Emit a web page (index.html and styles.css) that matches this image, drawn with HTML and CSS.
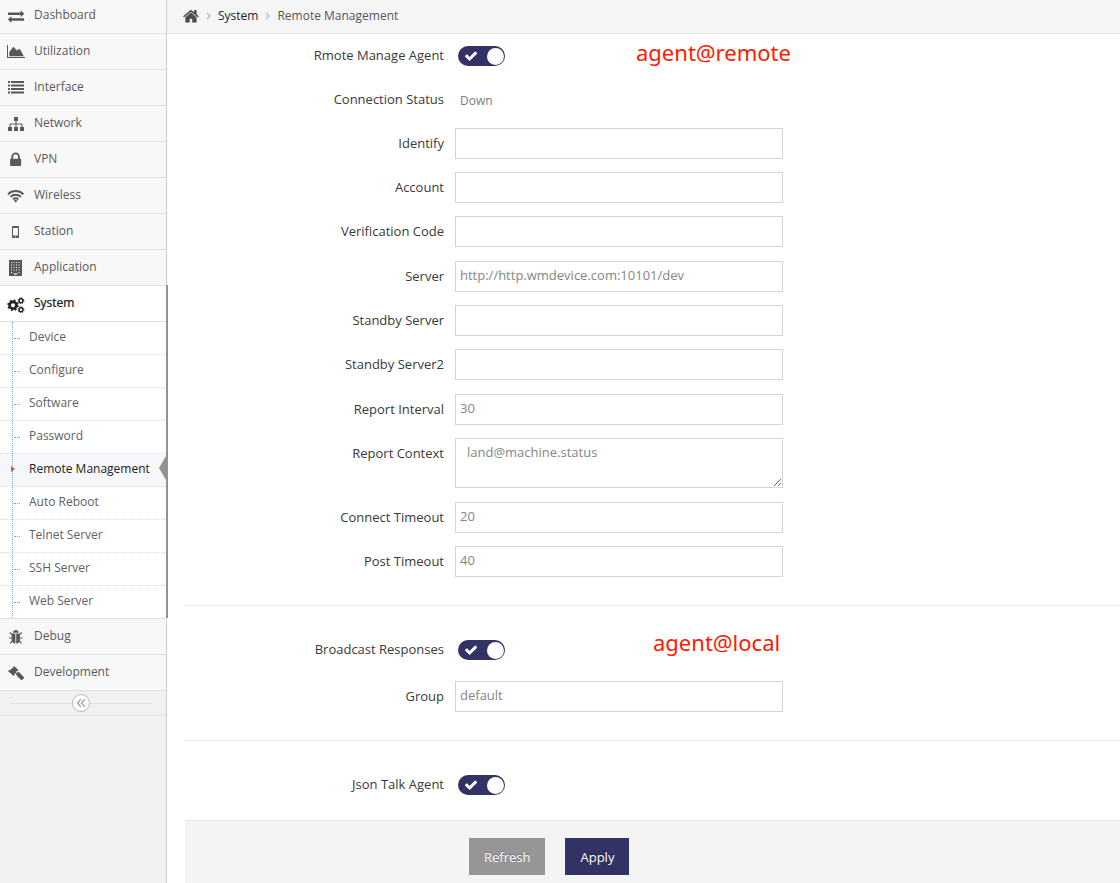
FILE: index.html
```html
<!DOCTYPE html>
<html lang="en">
<head>
<meta charset="utf-8">
<meta name="viewport" content="width=device-width, initial-scale=1">
<title>Remote Management</title>
<link rel="stylesheet" href="styles.css">
</head>
<body>
<svg class="defs" aria-hidden="true">
  <symbol id="check" viewBox="120 290 1552 1230"><path d="M1671 566q0 40-28 68l-724 724-136 136q-28 28-68 28t-68-28l-136-136-362-362q-28-28-28-68t28-68l136-136q28-28 68-28t68 28l294 295 656-657q28-28 68-28t68 28l136 136q28 28 28 68z"/></symbol>
</svg>
<div class="app">
  <nav class="sidebar" aria-label="Main menu">
    <ul class="menu">
      <li class="menu-item"><a href="#"><svg class="icon" viewBox="0 0 18 18"><path transform="translate(1 1) scale(.009)" d="M1792 1184v192q0 13-9.5 22.5t-22.5 9.5h-1376v192q0 13-9.500 22.500t-22.500 9.500q-12 0-24-10l-319-320q-9-9-9-22 0-14 9-23l320-320q9-9 23-9 13 0 22.500 9.500t9.500 22.500v192h1376q13 0 22.500 9.500t9.500 22.500zm0-544q0 14-9 23l-320 320q-9 9-23 9-13 0-22.500-9.500t-9.500-22.500v-192h-1376q-13 0-22.500-9.500t-9.500-22.500v-192q0-13 9.500-22.500t22.500-9.500h1376v-192q0-14 9-23t23-9q12 0 24 10l319 319q9 9 9 23z"/></svg><span>Dashboard</span></a></li>
      <li class="menu-item"><a href="#"><svg class="icon" viewBox="0 0 18 18"><path d="M0 2h1v12h17v1H0z"/><path d="M2.300 13.300V9L6.300 3.700l3.700 3.800 2.800-1.800 4 7.600z"/></svg><span>Utilization</span></a></li>
      <li class="menu-item"><a href="#"><svg class="icon" viewBox="0 0 18 18"><path d="M1 2h2v2H1zM4 2h13v2H4zM1 5.500h2v2H1zM4 5.500h13v2H4zM1 9h2v2H1zM4 9h13v2H4zM1 12.500h2v2H1zM4 12.500h13v2H4z"/></svg><span>Interface</span></a></li>
      <li class="menu-item"><a href="#"><svg class="icon" viewBox="0 0 18 18"><path d="M7.500 2h3a.5.5 0 0 1 .5.5v3a.5.5 0 0 1-.5.500h-1v2.500H15a.5.5 0 0 1 .5.5V12H17v4h-4v-4h1.500V9.500h-5V12H11v4H7v-4h1.500V9.500h-5V12H5v4H1v-4h1.500V9a.5.5 0 0 1 .5-.5h5.500V6h-1a.5.5 0 0 1-.5-.5v-3a.5.5 0 0 1 .5-.5z"/></svg><span>Network</span></a></li>
      <li class="menu-item"><a href="#"><svg class="icon" viewBox="0 0 18 18"><path transform="translate(0 .3) scale(.0096)" d="M640 768h512v-192q0-106-75-181t-181-75-181 75-75 181v192zm832 96v576q0 40-28 68t-68 28h-960q-40 0-68-28t-28-68v-576q0-40 28-68t68-28h32v-192q0-184 132-316t316-132 316 132 132 316v192h32q40 0 68 28t28 68z"/></svg><span>VPN</span></a></li>
      <li class="menu-item"><a href="#"><svg class="icon" viewBox="0 0 18 18"><g fill="none" stroke="currentColor" stroke-width="2"><path d="M1 7.200a11 11 0 0 1 15.400 0"/><path d="M3.500 9.900a7.400 7.400 0 0 1 10.400 0"/><path d="M6 12.400a3.900 3.900 0 0 1 5.400 0"/></g><path d="M8.700 15.400l-1.700-1.700a2.400 2.400 0 0 1 3.400 0z"/></svg><span>Wireless</span></a></li>
      <li class="menu-item"><a href="#"><svg class="icon" viewBox="0 0 18 18"><path fill-rule="evenodd" d="M6 3h5a1 1 0 0 1 1 1v10a1 1 0 0 1-1 1H6a1 1 0 0 1-1-1V4a1 1 0 0 1 1-1zm0 2v7.500h5V5zm2 8.200v1h1v-1z"/></svg><span>Station</span></a></li>
      <li class="menu-item"><a href="#"><svg class="icon" viewBox="0 0 18 18"><path d="M2 1h13v16h-4v-3H6v3H2z"/><path d="M6 14.500h5V17H6z"/><g class="panes" stroke-width="1" stroke-dasharray="1 1.500"><path d="M4 3.500h10M4 6h10M4 8.500h10M4 11h10M4 13.500h1.500M11.500 13.500H14"/></g><path class="panes" d="M7.500 15.500h2"/></svg><span>Application</span></a></li>
      <li class="menu-item open">
        <a href="#"><svg class="icon" viewBox="0 0 18 18"><g fill="none" stroke="currentColor"><circle cx="6" cy="10.300" r="3.400" stroke-width="2.600"/><circle cx="6" cy="10.300" r="5" stroke-width="1.500" stroke-dasharray="2 1.927"/><circle cx="14" cy="5.700" r="1.900" stroke-width="1.400"/><circle cx="14" cy="5.700" r="2.900" stroke-width="1" stroke-dasharray="1.200 1.078"/><circle cx="14" cy="14.700" r="1.900" stroke-width="1.400"/><circle cx="14" cy="14.700" r="2.900" stroke-width="1" stroke-dasharray="1.200 1.078"/></g></svg><span>System</span></a>
        <ul class="submenu">
          <li><a href="#">Device</a></li>
          <li><a href="#">Configure</a></li>
          <li><a href="#">Software</a></li>
          <li><a href="#">Password</a></li>
          <li class="active"><a href="#" aria-current="page">Remote Management</a></li>
          <li><a href="#">Auto Reboot</a></li>
          <li><a href="#">Telnet Server</a></li>
          <li><a href="#">SSH Server</a></li>
          <li><a href="#">Web Server</a></li>
        </ul>
      </li>
      <li class="menu-item"><a href="#"><svg class="icon" viewBox="0 0 18 18"><path d="M6 4.700a2.800 2.700 0 0 1 5.600 0z"/><path d="M4.700 5.500h3.700V15.500C6 15.500 4.700 14 4.700 11.500zM9.200 5.500h3.700v6c0 2.500-1.300 4-3.700 4z"/><path fill="none" stroke="currentColor" stroke-width="1.200" d="M2.800 4.500l2.400 2.400M14.800 4.500l-2.400 2.400M2 10h3M12.600 10h3M3 15.300l2.600-2.600M14.600 15.300L12 12.700"/></svg><span>Debug</span></a></li>
      <li class="menu-item"><a href="#"><svg class="icon" viewBox="0 0 18 18"><path d="M7.200 2l4.300 4.300-1 1-.6-.4-1 1L10 9l.9-.9 1.300.2 4.600 4.600a1 1 0 0 1 0 1.400l-1.500 1.500a1 1 0 0 1-1.400 0L9.500 11.400l-.2-1.300-.9-.9-1.200 1.200.4.600-1 1L1 6.900l1-1 .7.400L6.600 3.200 6.200 3z"/></svg><span>Development</span></a></li>
    </ul>
    <div class="collapse-bar">
      <button type="button" class="collapse" aria-label="Collapse menu"><svg viewBox="0 0 10 10"><path d="M5 1L1.500 5 5 9M9 1L5.500 5 9 9"/></svg></button>
    </div>
  </nav>

  <main class="main">
    <nav class="breadcrumb" aria-label="Breadcrumb">
      <a href="#" class="home" aria-label="Home"><svg viewBox="80 190 1640 1350"><path d="M1472 992v480q0 26-19 45t-45 19h-384v-384h-256v384h-384q-26 0-45-19t-19-45v-480q0-1 .5-3t.5-3l575-474 575 474q1 2 1 6zm223-69l-62 74q-8 9-21 11h-3q-13 0-21-7l-692-577-692 577q-12 8-24 7-13-2-21-11l-62-74q-8-10-7-23.500t11-21.500l719-599q32-26 76-26t76 26l244 204v-195q0-14 9-23t23-9h192q14 0 23 9t9 23v408l219 182q10 8 11 21.500t-7 23.500z"/></svg></a>
      <svg class="sep" viewBox="0 0 5 8"><path d="M1 1l3 3-3 3"/></svg>
      <a href="#">System</a>
      <svg class="sep" viewBox="0 0 5 8"><path d="M1 1l3 3-3 3"/></svg>
      <span class="current">Remote Management</span>
    </nav>

    <form class="form">
      <section class="section remote">
        <div class="group">
          <div class="row"><label for="agent">Rmote Manage Agent</label><div class="control"><span class="switch"><input type="checkbox" id="agent" checked><svg><use href="#check"/></svg></span><span class="note">agent@remote</span></div></div>
          <div class="row"><label for="status">Connection Status</label><div class="control"><output id="status">Down</output></div></div>
          <div class="row"><label for="identify">Identify</label><input class="field" type="text" id="identify"></div>
          <div class="row"><label for="account">Account</label><input class="field" type="text" id="account"></div>
          <div class="row"><label for="code">Verification Code</label><input class="field" type="text" id="code"></div>
        </div>
        <div class="group">
          <div class="row"><label for="server">Server</label><input class="field" type="text" id="server" value="http://http.wmdevice.com:10101/dev"></div>
          <div class="row"><label for="standby">Standby Server</label><input class="field" type="text" id="standby"></div>
          <div class="row"><label for="standby2">Standby Server2</label><input class="field" type="text" id="standby2"></div>
        </div>
        <div class="group">
          <div class="row"><label for="interval">Report Interval</label><input class="field" type="text" id="interval" value="30"></div>
          <div class="row"><label for="context">Report Context</label><textarea class="field" id="context">land@machine.status</textarea></div>
        </div>
        <div class="group">
          <div class="row"><label for="connect">Connect Timeout</label><input class="field" type="text" id="connect" value="20"></div>
          <div class="row"><label for="post">Post Timeout</label><input class="field" type="text" id="post" value="40"></div>
        </div>
      </section>
      <section class="section local">
        <div class="row"><label for="broadcast">Broadcast Responses</label><div class="control"><span class="switch"><input type="checkbox" id="broadcast" checked><svg><use href="#check"/></svg></span><span class="note note-local">agent@local</span></div></div>
        <div class="row"><label for="group">Group</label><input class="field" type="text" id="group" value="default"></div>
      </section>
      <section class="section talk">
        <div class="row"><label for="json">Json Talk Agent</label><div class="control"><span class="switch"><input type="checkbox" id="json" checked><svg><use href="#check"/></svg></span></div></div>
      </section>
      <div class="actions row">
        <div class="buttons">
          <button type="button" class="btn">Refresh</button>
          <button type="button" class="btn primary">Apply</button>
        </div>
      </div>
    </form>
  </main>
</div>
</body>
</html>
```

FILE: styles.css
```css
* { box-sizing: border-box; }

body {
  margin: 0;
  background: #fff;
  color: #393939;
  font: 13px/18px "Open Sans", "Noto Sans", sans-serif;
}

a { color: inherit; text-decoration: none; }
ul { margin: 0; padding: 0; list-style: none; }
svg { display: block; fill: currentColor; }
.defs { display: none; }

.app { display: flex; min-height: 100vh; }

/* Sidebar */
.sidebar {
  flex: 0 0 167px;
  border-right: 1px solid #ccc;
  background: #f1f1f1;
  font-size: 12px;
}

.menu-item {
  position: relative;
  border-top: 1px solid #e2e2e2;
  background: #f8f8f8;
  color: #585858;
}
.menu-item:first-child { border-top: 0; }
.menu-item > a {
  display: flex;
  gap: 9px;
  padding: 9px 0 8px 7px;
  line-height: 16px;
}
.menu-item:first-child > a { padding-top: 7px; }
.icon { width: 18px; height: 18px; }
.panes { fill: none; stroke: #f8f8f8; }

.menu-item.open { background: #fff; }
.menu-item.open > a { color: #222; text-shadow: 0 0 1px rgba(34, 34, 34, .6); }
.menu-item.open::after {
  content: "";
  position: absolute;
  top: -1px;
  right: -2px;
  bottom: 0;
  width: 2px;
  background: #939393;
}

.submenu {
  position: relative;
  border-top: 1px solid #e2e2e2;
  color: #616161;
}
.submenu::before {
  content: "";
  position: absolute;
  z-index: 1;
  top: 0;
  bottom: 0;
  left: 12px;
  border-left: 1px dotted #7ba9cc;
}
.submenu li { position: relative; border-bottom: 1px dotted #dcdcdc; }
.submenu li:last-child { border-bottom: 0; }
.submenu a { display: block; padding: 6px 0 8px 29px; }
.submenu li::before {
  content: "";
  position: absolute;
  top: 16px;
  left: 14px;
  width: 6px;
  border-top: 1px dotted #7ba9cc;
}
.submenu .active { background: #f5f7fb; color: #222; }
.submenu .active::before {
  z-index: 2;
  top: 12px;
  left: 11px;
  width: 0;
  border: solid transparent;
  border-width: 3px 0 3px 4px;
  border-left-color: #c86139;
}
.submenu .active::after {
  content: "";
  position: absolute;
  top: 2px;
  right: 0;
  border: solid transparent;
  border-width: 12px 7px 12px 0;
  border-right-color: #939393;
}

.collapse-bar {
  display: flex;
  align-items: center;
  height: 26px;
  padding: 0 14px 0 10px;
  border: solid #e0e0e0;
  border-width: 1px 0;
}
.collapse-bar::before,
.collapse-bar::after { content: ""; flex: 1; border-top: 1px solid #e0e0e0; }
.collapse {
  display: grid;
  place-items: center;
  width: 18px;
  height: 18px;
  padding: 0;
  border: 1px solid #bbb;
  border-radius: 50%;
  background: #fff;
  color: #aaa;
}
.collapse svg { width: 10px; height: 10px; fill: none; stroke: currentColor; stroke-width: 1.5; }

/* Content */
.main { flex: 1; min-width: 0; display: flex; flex-direction: column; }

.breadcrumb {
  display: flex;
  align-items: center;
  height: 34px;
  padding: 0 16px 2px;
  border-bottom: 1px solid #e5e5e5;
  background: #f5f5f5;
  color: #222;
  font-size: 12px;
}
.home { color: #4c4c4c; }
.home svg { width: 16px; height: 14px; }
.sep { width: 5px; height: 8px; margin: 0 7px; fill: none; stroke: #b2b6bf; stroke-width: 1.2; }
.current { color: #555; }

.form { display: flex; flex: 1; flex-direction: column; padding-left: 18px; }
.section { display: flex; flex-direction: column; }
.section + .section { border-top: 1px dotted #dcdcdc; }
.remote { gap: 14px; padding: 6px 0 28px; }
.local { gap: 16px; padding: 28px 0; }
.talk { padding: 28px 0 20px; }
.group { display: flex; flex-direction: column; gap: 13px; }

.row {
  display: grid;
  grid-template-columns: minmax(0, 259fr) minmax(0, 328fr) minmax(0, 326fr);
  column-gap: 11px;
}
.row > label { line-height: 30px; text-align: right; }

.control { display: flex; align-items: center; height: 31px; padding-left: 3px; }
.control output { padding: 3px 0 0 2px; color: #7b7b7b; font-size: 12px; }

.field {
  width: 100%;
  height: 31px;
  margin: 0;
  padding: 4px 4px 7px;
  border: 1px solid #d5d5d5;
  border-radius: 0;
  outline: 0;
  background: #fff;
  color: #858585;
  font: inherit;
}
textarea.field { display: block; height: 50px; padding-left: 11px; }

.switch { position: relative; flex: none; width: 47px; height: 20px; }
.switch input {
  appearance: none;
  display: block;
  width: 100%;
  height: 100%;
  margin: 0;
  border-radius: 10px;
  background: #323264;
}
.switch input::after {
  content: "";
  position: absolute;
  top: 2px;
  right: 1px;
  width: 17px;
  height: 17px;
  border-radius: 50%;
  background: #fff;
}
.switch svg { position: absolute; top: 5px; left: 7px; width: 12px; height: 10px; color: #fff; pointer-events: none; }

.note {
  align-self: flex-start;
  margin-left: 131px;
  color: #ff1a00;
  font: 22px/24px "Noto Sans", "Open Sans", sans-serif;
  white-space: nowrap;
}
.note-local { margin-left: 148px; line-height: 16px; }

.actions {
  flex: 1;
  padding: 17px 0 8px;
  border-top: 1px solid #e5e5e5;
  background: #f4f4f4;
}
.buttons { display: flex; grid-column: 2; align-items: flex-start; gap: 20px; padding-left: 14px; }
.btn {
  height: 37px;
  padding: 0 15px;
  border: 0;
  background: #969696;
  color: #fff;
  font: inherit;
  text-shadow: 0 -1px 0 rgba(0, 0, 0, .25);
}
.primary { background: #323264; }
```
